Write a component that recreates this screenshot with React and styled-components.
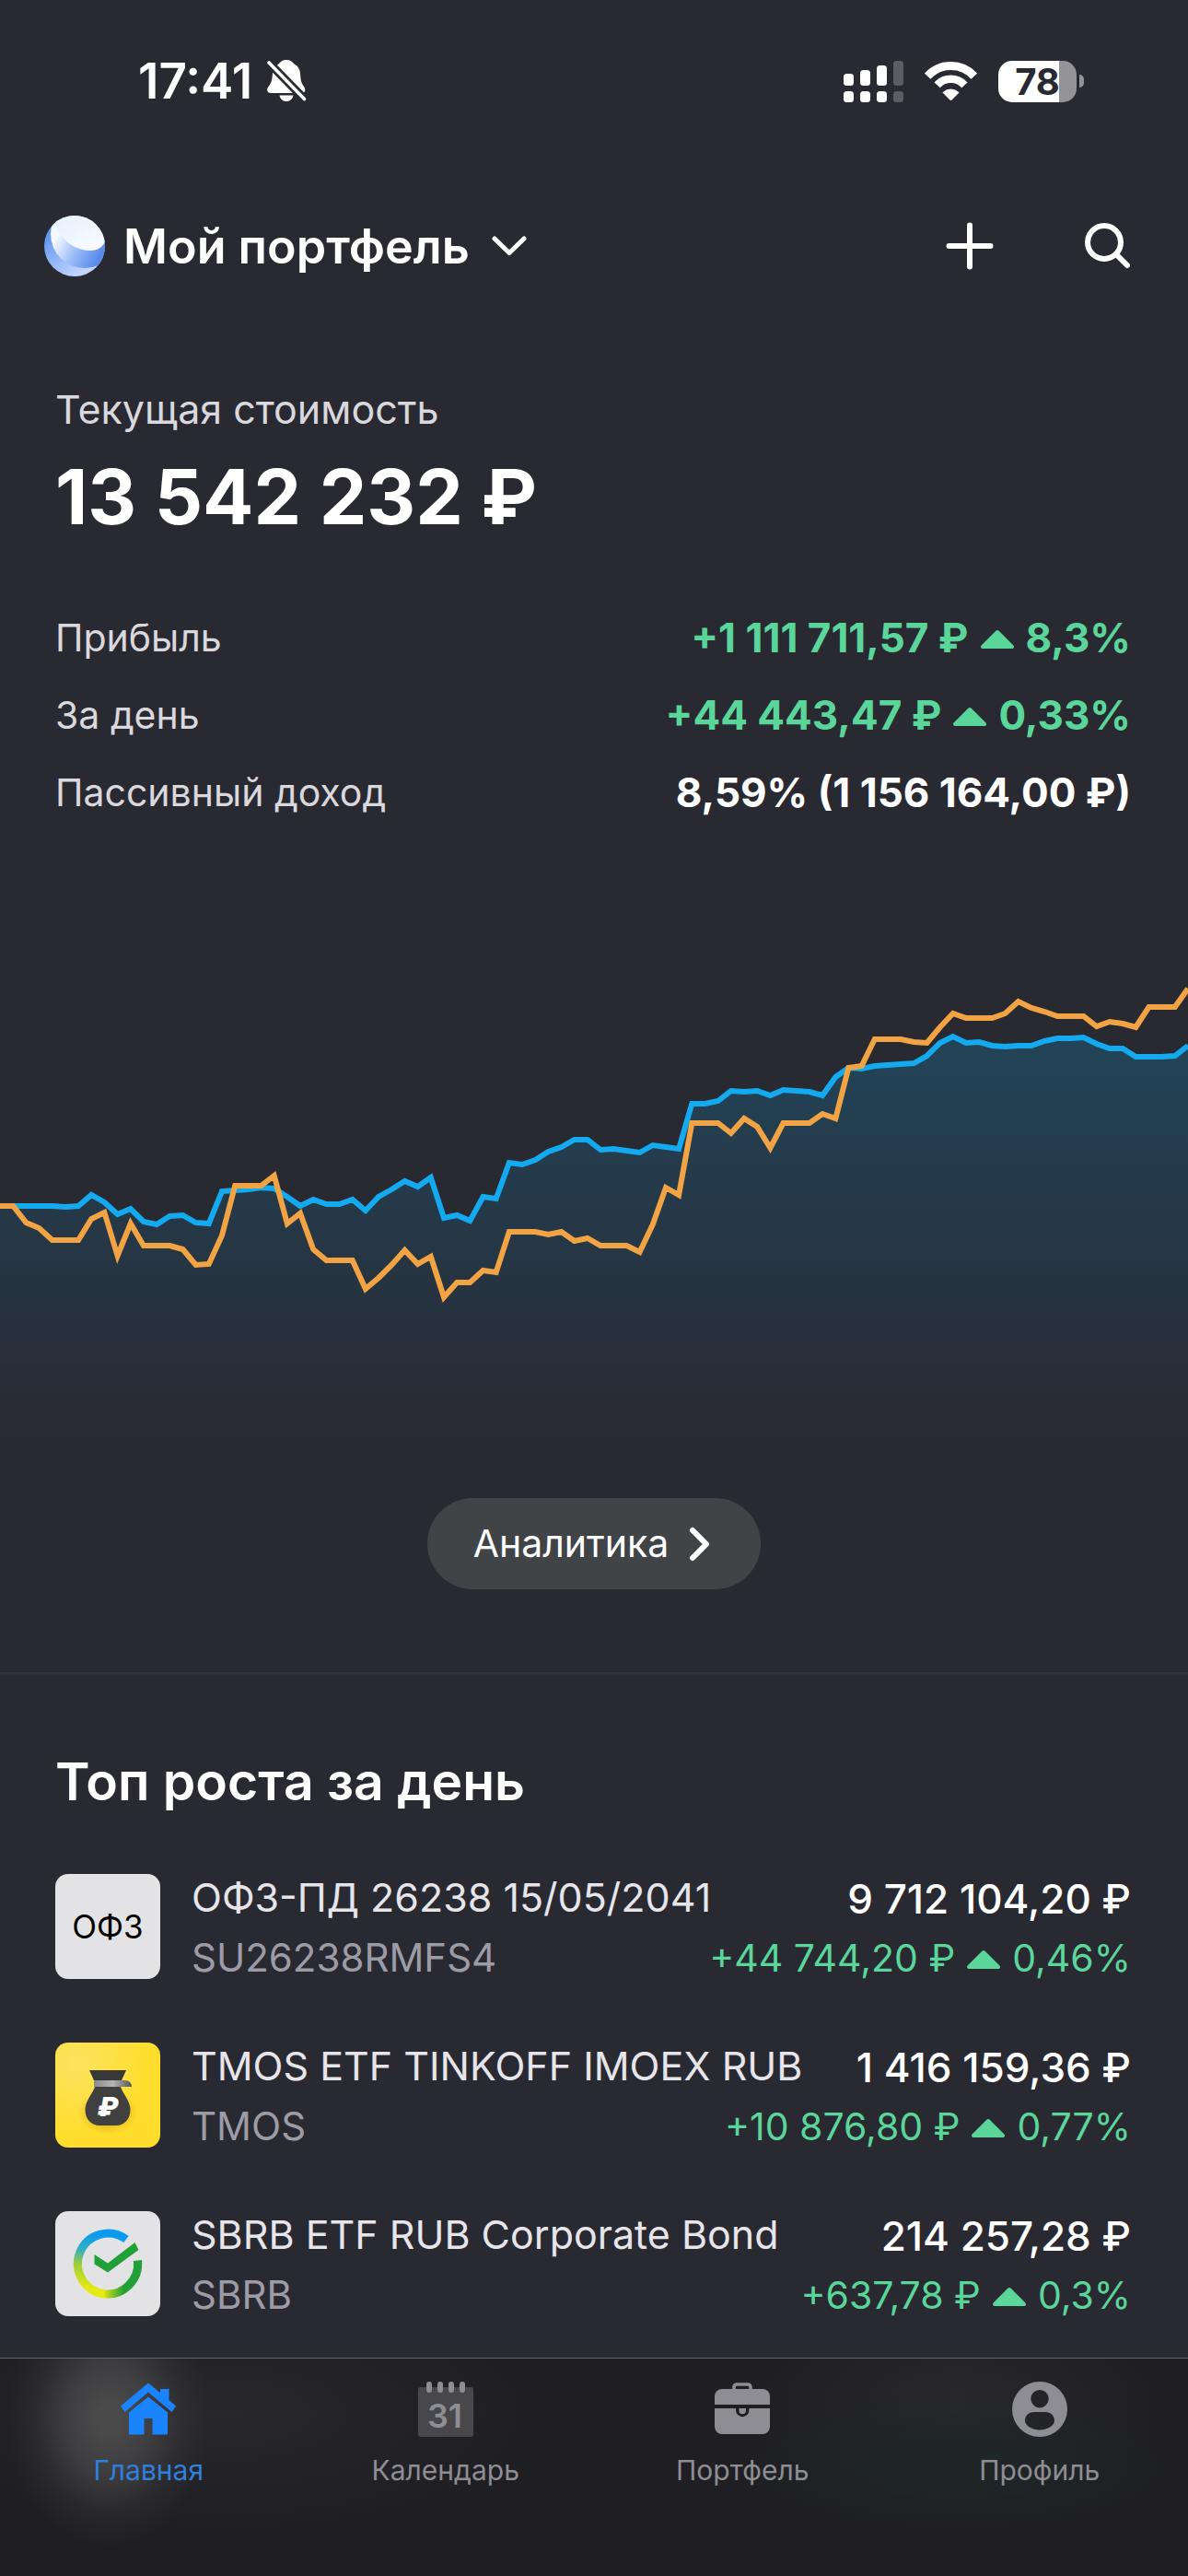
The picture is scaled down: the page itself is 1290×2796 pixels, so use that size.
import styled, { createGlobalStyle } from 'styled-components'

const green = '#5bd69b'

const blueLine = [
  1309, 1309, 1309, 1309, 1309, 1310, 1309, 1297, 1305, 1318, 1312, 1326, 1329, 1320, 1319, 1327,
  1328, 1293, 1292, 1291, 1289, 1290, 1299, 1309, 1302, 1307, 1307, 1302, 1314, 1299, 1291, 1282,
  1288, 1278, 1322, 1319, 1325, 1299, 1301, 1262, 1264, 1259, 1250, 1245, 1237, 1237, 1248, 1247,
  1249, 1251, 1243, 1245, 1247, 1198, 1198, 1195, 1184, 1185, 1184, 1189, 1183, 1184, 1185, 1189,
  1169, 1159, 1160, 1157, 1156, 1155, 1154, 1146, 1132, 1125, 1132, 1131, 1135, 1136, 1135, 1135,
  1130, 1127, 1127, 1126, 1133, 1138, 1138, 1147, 1147, 1147, 1146, 1135,
]

const orangeLine = [
  1309, 1309, 1327, 1333, 1346, 1346, 1346, 1323, 1316, 1363, 1328, 1352, 1352, 1352, 1356, 1373,
  1372, 1341, 1287, 1287, 1287, 1276, 1328, 1317, 1356, 1368, 1368, 1368, 1399, 1387, 1373, 1357,
  1372, 1364, 1408, 1392, 1392, 1379, 1381, 1337, 1337, 1337, 1340, 1337, 1347, 1344, 1352, 1352,
  1352, 1359, 1329, 1289, 1297, 1219, 1219, 1219, 1230, 1214, 1223, 1246, 1219, 1219, 1219, 1209,
  1214, 1159, 1157, 1128, 1128, 1128, 1131, 1132, 1115, 1100, 1105, 1105, 1105, 1100, 1087, 1094,
  1098, 1103, 1103, 1103, 1114, 1109, 1111, 1115, 1093, 1093, 1093, 1073,
]

const holdings = [
  { name: 'ОФЗ-ПД 26238 15/05/2041', ticker: 'SU26238RMFS4', price: '9 712 104,20 ₽', change: '+44 744,20 ₽', percent: '0,46%', logo: 'ofz' },
  { name: 'TMOS ETF TINKOFF IMOEX RUB', ticker: 'TMOS', price: '1 416 159,36 ₽', change: '+10 876,80 ₽', percent: '0,77%', logo: 'bag' },
  { name: 'SBRB ETF RUB Corporate Bond', ticker: 'SBRB', price: '214 257,28 ₽', change: '+637,78 ₽', percent: '0,3%', logo: 'sber' },
]

const toPath = (values) =>
  values.map((y, i) => `${i ? 'L' : 'M'}${((i * 1290) / (values.length - 1)).toFixed(1)} ${y}`).join('')

function BellOffIcon() {
  return (
    <svg width="43" height="46" viewBox="0 0 43 46" aria-hidden="true">
      <path fill="#fff" d="M21 0c4 0 6.500 2 8.500 4.500 4 2 6 5.500 6.500 10 .4 7 1 10.500 4 14.500 2.500 3.500 1 7-2 7H4c-4 0-5-4-2.500-7C5 25 5.500 21 6 14.500 6.500 10 9 6.500 12.500 4.500 14.500 2 17 0 21 0z" />
      <path fill="#fff" d="M13.500 38.500h15c-.8 4-3.500 6.500-7.500 6.500s-6.700-2.500-7.500-6.500z" />
      <path stroke="#292932" strokeWidth="9" d="M0 1 42 44" />
      <path stroke="#fff" strokeWidth="3.600" strokeLinecap="round" d="M2 3 40.500 42.500" />
    </svg>
  )
}

function SignalIcon() {
  return (
    <svg width="65" height="45" viewBox="0 0 65 45" fill="#fff" aria-hidden="true">
      <rect x="0" y="14" width="11" height="13" rx="3.500" />
      <rect x="18" y="10" width="11" height="17" rx="3.500" />
      <rect x="36" y="5" width="11" height="22" rx="3.500" />
      <rect x="54" y="0" width="11" height="27" rx="3.500" opacity=".24" />
      <rect x="0" y="33" width="11" height="12" rx="3.500" />
      <rect x="18" y="33" width="11" height="12" rx="3.500" />
      <rect x="36" y="33" width="11" height="12" rx="3.500" />
      <rect x="54" y="33" width="11" height="12" rx="3.500" opacity=".24" />
    </svg>
  )
}

function WifiIcon() {
  return (
    <svg width="57" height="43" viewBox="0 0 57 43" fill="none" stroke="#fff" aria-hidden="true">
      <path strokeWidth="9" d="M3.100 15.700A34.500 34.500 0 0 1 53.900 15.700" />
      <path strokeWidth="8.400" d="M13.600 25.300A20.200 20.200 0 0 1 43.400 25.300" />
      <path fill="#fff" strokeWidth="1" strokeLinejoin="round" d="M28.500 42 20 33.500A12 12 0 0 1 37 33.500Z" />
    </svg>
  )
}

function PortfolioLogo() {
  return (
    <svg width="66" height="66" viewBox="0 0 66 66" aria-hidden="true">
      <defs>
        <clipPath id="ball"><circle cx="33" cy="33" r="33" /></clipPath>
        <linearGradient id="ballBase" x1="0" y1=".2" x2=".5" y2="1">
          <stop offset="0" stopColor="#4f8cec" />
          <stop offset="1" stopColor="#c3d4ff" />
        </linearGradient>
        <linearGradient id="ballMid" x1="8" y1="22" x2="58" y2="48" gradientUnits="userSpaceOnUse">
          <stop offset=".1" stopColor="#f4f8ff" />
          <stop offset=".55" stopColor="#9bbcf8" />
          <stop offset="1" stopColor="#5a8bea" />
        </linearGradient>
        <linearGradient id="ballTop" x1="0" y1="0" x2="1" y2="1">
          <stop offset="0" stopColor="#e4effd" />
          <stop offset="1" stopColor="#fbfdff" />
        </linearGradient>
      </defs>
      <g clipPath="url(#ball)">
        <rect width="66" height="66" fill="url(#ballBase)" />
        <circle cx="44" cy="20" r="37" fill="url(#ballMid)" />
        <path d="M11 4C14 24 32 38 50 38c8 0 14-4 16-10V0H11z" fill="url(#ballTop)" />
      </g>
    </svg>
  )
}

function ArrowUp() {
  return (
    <svg width="36" height="24" viewBox="0 0 36 24" aria-hidden="true">
      <path fill={green} stroke={green} strokeWidth="4" strokeLinejoin="round" d="M18 6 34 22H2Z" />
    </svg>
  )
}

function BagLogo() {
  return (
    <svg width="114" height="114" viewBox="0 0 114 114" aria-hidden="true">
      <defs>
        <linearGradient id="band" x1="0" x2="1">
          <stop offset="0" stopColor="#8a8a8a" />
          <stop offset=".5" stopColor="#b5b5b5" />
          <stop offset="1" stopColor="#555" />
        </linearGradient>
        <radialGradient id="bagShade">
          <stop offset=".5" stopColor="#d9a514" stopOpacity=".6" />
          <stop offset="1" stopColor="#d9a514" stopOpacity="0" />
        </radialGradient>
      </defs>
      <ellipse cx="57" cy="76" rx="33" ry="24" fill="url(#bagShade)" />
      <path fill="#383839" d="M37 30h40l-5 11H42z" />
      <path fill="#404041" d="M43 48h28c2 7 10.500 15 10.500 25C81.500 83 75 90 66 90H48c-9 0-15.500-7-15.500-17C32.500 63 41 55 43 48z" />
      <path fill="url(#band)" d="M42 41h34c4 0 7 3 7 7H42z" />
      <text x="57" y="80" textAnchor="middle" fill="#fff" fontFamily="Inter" fontWeight="900" fontStyle="italic" fontSize="29">₽</text>
    </svg>
  )
}

function SberLogo() {
  return (
    <svg width="114" height="114" viewBox="0 0 114 114" fill="none" aria-hidden="true">
      <defs>
        <linearGradient id="sberLeft" x1="60" y1="20" x2="50" y2="94" gradientUnits="userSpaceOnUse">
          <stop offset=".1" stopColor="#0a9af0" />
          <stop offset=".35" stopColor="#35b0c0" />
          <stop offset=".55" stopColor="#9ccd3c" />
          <stop offset=".9" stopColor="#e6ea12" />
        </linearGradient>
        <linearGradient id="sberRight" x1="52" y1="0" x2="80" y2="0" gradientUnits="userSpaceOnUse">
          <stop offset="0" stopColor="#e0e614" />
          <stop offset=".8" stopColor="#21a038" />
        </linearGradient>
      </defs>
      <path stroke="url(#sberRight)" strokeWidth="9" d="M89.500 53.500A33 33 0 0 1 52 89.600" />
      <path stroke="url(#sberLeft)" strokeWidth="9" d="M77 30.500A33 33 0 1 0 54 89.900" />
      <path fill="#21a038" d="M42.500 47 57 56.500 86.500 34 90.500 42 57 66.500 42.500 57.500z" />
    </svg>
  )
}

function HomeIcon() {
  return (
    <svg width="60" height="60" viewBox="0 0 60 60" fill="#1a84ff" aria-hidden="true">
      <path d="M30 1.500 43 12.300V8h9.500v12L60 26.500 55.500 33 30 11.500 4.500 33 0 26.500z" />
      <path d="M30 16.500 51 33.500V57.500H34.500V40h-9v17.500H9V33.500z" />
    </svg>
  )
}

function CalendarIcon() {
  return (
    <svg width="60" height="60" viewBox="0 0 60 60" fill="#8e8d93" aria-hidden="true">
      <rect y="6" width="60" height="54" rx="3" fill="#48474c" />
      <rect x="9" y="0" width="6" height="12" rx="3" />
      <rect x="21" y="0" width="6" height="12" rx="3" />
      <rect x="33" y="0" width="6" height="12" rx="3" />
      <rect x="45" y="0" width="6" height="12" rx="3" />
      <text x="29" y="50" textAnchor="middle" fontFamily="Inter" fontWeight="600" fontSize="36">31</text>
    </svg>
  )
}

function BriefcaseIcon() {
  return (
    <svg width="60" height="60" viewBox="0 0 60 60" fill="#8e8d93" aria-hidden="true">
      <path fill="none" stroke="#8e8d93" strokeWidth="3.600" d="M21 10V6a3 3 0 0 1 3-3h12a3 3 0 0 1 3 3v4" />
      <path d="M0 25V16a8 8 0 0 1 8-8h44a8 8 0 0 1 8 8v9z" />
      <path d="M0 29h23v2a7.200 7.200 0 0 0 14.400 0v-2H60v20a8 8 0 0 1-8 8H8a8 8 0 0 1-8-8z" />
      <path d="M26.500 29h7.500v2.500a3.750 3.750 0 0 1-7.500 0z" />
    </svg>
  )
}

function ProfileIcon() {
  return (
    <svg width="60" height="60" viewBox="0 0 60 60" aria-hidden="true">
      <path
        fill="#8e8d93"
        fillRule="evenodd"
        d="M30 0a30 30 0 1 1 0 60 30 30 0 0 1 0-60zM30 9a9.700 9.700 0 1 0 0 19.400A9.700 9.700 0 0 0 30 9zM24 33c-6 0-10 4-10 9.500C14 47 21 52.500 30 52.500S46 47 46 42.500C46 37 42 33 36 33z"
      />
    </svg>
  )
}

const tabs = [
  { label: 'Главная', Icon: HomeIcon, active: true },
  { label: 'Календарь', Icon: CalendarIcon },
  { label: 'Портфель', Icon: BriefcaseIcon },
  { label: 'Профиль', Icon: ProfileIcon },
]

function Chart() {
  return (
    <ChartSvg viewBox="0 1040 1290 560" role="img" aria-label="График стоимости портфеля">
      <defs>
        <linearGradient id="area" x1="0" y1="1110" x2="0" y2="1570" gradientUnits="userSpaceOnUse">
          <stop offset="0" stopColor="#0aa8e4" stopOpacity=".22" />
          <stop offset="1" stopColor="#0aa8e4" stopOpacity="0" />
        </linearGradient>
      </defs>
      <path d={`${toPath(blueLine)}V1600H0Z`} fill="url(#area)" />
      <path d={toPath(blueLine)} fill="none" stroke="#14aaf0" strokeWidth="6" strokeMiterlimit="10" />
      <path d={toPath(orangeLine)} fill="none" stroke="#f2a444" strokeWidth="6" strokeMiterlimit="10" />
    </ChartSvg>
  )
}

function Holding({ name, ticker, price, change, percent, logo }) {
  return (
    <HoldingRow>
      <LogoTile $yellow={logo === 'bag'}>
        {logo === 'ofz' && 'ОФЗ'}
        {logo === 'bag' && <BagLogo />}
        {logo === 'sber' && <SberLogo />}
      </LogoTile>
      <HoldingBody>
        <HoldingLine>
          <HoldingName>{name}</HoldingName>
          <Price>{price}</Price>
        </HoldingLine>
        <HoldingLine>
          <Ticker>{ticker}</Ticker>
          <Change>
            {change}
            <ArrowUp />
            {percent}
          </Change>
        </HoldingLine>
      </HoldingBody>
    </HoldingRow>
  )
}

export default function App() {
  return (
    <Page>
      <GlobalStyle />
      <StatusBar>
        <Clock>
          17:41
          <BellOffIcon />
        </Clock>
        <StatusIcons>
          <SignalIcon />
          <WifiIcon />
          <Battery>
            <BatteryBody>78</BatteryBody>
            <BatteryTip />
          </Battery>
        </StatusIcons>
      </StatusBar>

      <Header>
        <PortfolioButton type="button">
          <PortfolioLogo />
          Мой портфель
          <svg width="42" height="22" viewBox="-4 0 42 22" fill="none" aria-hidden="true">
            <path stroke="#fff" strokeWidth="5" strokeLinecap="round" strokeLinejoin="round" d="M3 3 19 18.500 35 3" />
          </svg>
        </PortfolioButton>
        <Actions>
          <IconButton type="button" aria-label="Добавить">
            <svg width="72" height="72" viewBox="0 0 72 72" aria-hidden="true">
              <path stroke="#fff" strokeWidth="6" strokeLinecap="round" d="M36 13.500v45M13.500 36h45" />
            </svg>
          </IconButton>
          <IconButton type="button" aria-label="Поиск">
            <svg width="72" height="72" viewBox="0 0 72 72" fill="none" stroke="#fff" aria-hidden="true">
              <circle cx="33" cy="32" r="18" strokeWidth="6" />
              <path strokeWidth="6" strokeLinecap="round" d="M46 45 58 57" />
            </svg>
          </IconButton>
        </Actions>
      </Header>

      <Summary>
        <SummaryLabel>Текущая стоимость</SummaryLabel>
        <Total>13 542 232 ₽</Total>
        <Stats>
          <Stat>
            <StatLabel>Прибыль</StatLabel>
            <StatValue $up>
              +1 111 711,57 ₽
              <ArrowUp />
              8,3%
            </StatValue>
          </Stat>
          <Stat>
            <StatLabel>За день</StatLabel>
            <StatValue $up>
              +44 443,47 ₽
              <ArrowUp />
              0,33%
            </StatValue>
          </Stat>
          <Stat>
            <StatLabel>Пассивный доход</StatLabel>
            <StatValue>8,59% (1 156 164,00 ₽)</StatValue>
          </Stat>
        </Stats>
      </Summary>

      <ChartSection>
        <Chart />
        <AnalyticsButton type="button">
          Аналитика
          <svg width="24" height="38" viewBox="0 0 24 38" fill="none" aria-hidden="true">
            <path stroke="#fff" strokeWidth="6" strokeLinecap="round" strokeLinejoin="round" d="M4 4 19 19 4 34" />
          </svg>
        </AnalyticsButton>
      </ChartSection>

      <TopSection>
        <SectionTitle>Топ роста за день</SectionTitle>
        <HoldingList>
          {holdings.map((item) => (
            <Holding key={item.ticker} {...item} />
          ))}
        </HoldingList>
      </TopSection>

      <TabBar>
        {tabs.map(({ label, Icon, active }) => (
          <Tab key={label} href="#" $active={active}>
            <Icon />
            {label}
          </Tab>
        ))}
      </TabBar>
    </Page>
  )
}

const GlobalStyle = createGlobalStyle`
  * {
    box-sizing: border-box;
  }
  body {
    margin: 0;
    background: #292932;
    color: #fff;
    font-family: Inter, "Liberation Sans", sans-serif;
  }
  button {
    padding: 0;
    border: 0;
    background: none;
    color: inherit;
    font: inherit;
    cursor: pointer;
  }
  svg {
    flex-shrink: 0;
  }
`

const Page = styled.div`
  display: flex;
  flex-direction: column;
  min-height: 100vh;
`

const StatusBar = styled.div`
  display: flex;
  justify-content: space-between;
  align-items: center;
  height: 176px;
  padding: 0 113px 0 150px;
`

const Clock = styled.div`
  display: flex;
  align-items: center;
  gap: 16px;
  font-size: 53px;
  font-weight: 600;
`

const StatusIcons = styled.div`
  display: flex;
  align-items: center;
  gap: 23px;
`

const Battery = styled.div`
  display: flex;
  align-items: center;
  gap: 3px;
`

const BatteryBody = styled.div`
  width: 85px;
  height: 45px;
  border-radius: 15px;
  background: linear-gradient(90deg, #fff 66px, #949398 66px);
  color: #292932;
  font-size: 40px;
  font-weight: 700;
  line-height: 45px;
  text-align: center;
`

const BatteryTip = styled.div`
  width: 5px;
  height: 14px;
  border-radius: 0 5px 5px 0;
  background: #949398;
`

const Header = styled.header`
  display: flex;
  justify-content: space-between;
  align-items: center;
  height: 182px;
  padding: 0 52px 0 48px;
`

const PortfolioButton = styled.button`
  && {
    display: flex;
    align-items: center;
    gap: 20px;
    font-size: 52px;
    font-weight: 600;
  }
`

const Actions = styled.div`
  display: flex;
  gap: 77px;
`

const IconButton = styled.button`
  display: flex;
`

const Summary = styled.section`
  padding: 58px 62px 0 60px;
`

const SummaryLabel = styled.div`
  color: #d9d8dd;
  font-size: 43px;
  line-height: 56px;
`

const Total = styled.div`
  margin-top: 20px;
  font-size: 82px;
  font-weight: 700;
  line-height: 96px;
`

const Stats = styled.dl`
  margin: 62px 0 0;
`

const Stat = styled.div`
  display: flex;
  justify-content: space-between;
  line-height: 84px;
`

const StatLabel = styled.dt`
  color: #d9d8dd;
  font-size: 41px;
`

const StatValue = styled.dd`
  display: flex;
  align-items: center;
  gap: 13px;
  margin: 0;
  color: ${(props) => (props.$up ? green : '#fff')};
  font-size: 44px;
  font-weight: 700;
`

const ChartSection = styled.section`
  display: flex;
  flex-direction: column;
  align-items: center;
  padding: 138px 0 90px;
  border-bottom: 3px solid #32323c;
`

const ChartSvg = styled.svg`
  display: block;
  width: 100%;
`

const AnalyticsButton = styled.button`
  && {
    display: flex;
    align-items: center;
    gap: 22px;
    margin-top: 26px;
    padding: 0 54px 0 50px;
    border-radius: 50px;
    background: #414447;
    font-size: 41px;
    line-height: 99px;
  }
`

const TopSection = styled.section`
  padding: 80px 62px 43px 60px;
`

const SectionTitle = styled.h2`
  margin: 0;
  font-size: 57px;
  font-weight: 600;
  line-height: 72px;
`

const HoldingList = styled.ul`
  display: flex;
  flex-direction: column;
  gap: 67px;
  margin: 64px 0 0;
  padding: 0;
  list-style: none;
`

const HoldingRow = styled.li`
  display: flex;
  align-items: flex-start;
  gap: 34px;
  white-space: nowrap;
`

const LogoTile = styled.div`
  display: flex;
  align-items: center;
  justify-content: center;
  flex-shrink: 0;
  width: 114px;
  height: 114px;
  border-radius: 14px;
  overflow: hidden;
  background: ${(props) => (props.$yellow ? 'radial-gradient(circle at 20% 20%, #fde360, #ffdd2d 60%)' : '#e3e3e5')};
  color: #000;
  font-size: 35px;
`

const HoldingBody = styled.div`
  display: flex;
  flex: 1;
  flex-direction: column;
  gap: 12px;
`

const HoldingLine = styled.div`
  display: flex;
  justify-content: space-between;
  line-height: 50px;
`

const HoldingName = styled.div`
  color: #e6e5ea;
  font-size: 43px;
`

const Ticker = styled.div`
  color: #9d9ca6;
  font-size: 42px;
`

const Price = styled.div`
  font-size: 44px;
  font-weight: 500;
  line-height: 54px;
`

const Change = styled.div`
  display: flex;
  align-items: center;
  gap: 13px;
  color: ${green};
  font-size: 41px;
`

const TabBar = styled.nav`
  display: grid;
  grid-template-columns: repeat(4, 1fr);
  margin-top: auto;
  padding: 25px 0 95px;
  border-top: 1px solid #65666a;
  background:
    radial-gradient(ellipse 110px 140px at 118px 65px, #4a4a4b 10%, #4a4a4bb0 42%, #4a4a4b38 72%, #4a4a4b00),
    radial-gradient(ellipse 330px 130px at 250px 60px, #28272b, #28272b00),
    radial-gradient(ellipse 260px 80px at 1040px 115px, #1e2726, #1e272600),
    radial-gradient(ellipse 220px 110px at 1040px 50px, #29282c, #29282c00),
    #1f1e23;
`

const Tab = styled.a`
  display: flex;
  flex-direction: column;
  align-items: center;
  gap: 16px;
  color: ${(props) => (props.$active ? '#2f7fdc' : '#8e8d93')};
  font-size: 30px;
  line-height: 40px;
  text-decoration: none;
`
